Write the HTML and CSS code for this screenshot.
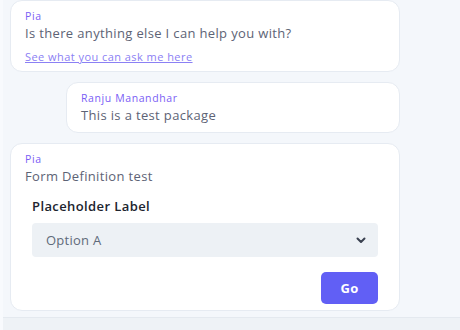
FILE: index.html
```html
<!DOCTYPE html>
<html>
<head>
<meta charset="utf-8">
<link rel="stylesheet" href="styles.css">
</head>
<body>
<div class="page">
  <div class="chat">
    <div class="card bot">
      <div class="name">Pia</div>
      <div class="msg">Is there anything else I can help you with?</div>
      <a class="link" href="#">See what you can ask me here</a>
    </div>
    <div class="card user">
      <div class="name">Ranju Manandhar</div>
      <div class="msg">This is a test package</div>
    </div>
    <div class="card bot form-card">
      <div class="name">Pia</div>
      <div class="msg">Form Definition test</div>
      <div class="form">
        <div class="label">Placeholder Label</div>
        <div class="select">
          <span>Option A</span>
          <svg class="chev" width="10" height="7" viewBox="0 0 10 7"><path d="M1.5 1.5 L5 5 L8.5 1.5" fill="none" stroke="#3a4150" stroke-width="2" stroke-linecap="round" stroke-linejoin="round"/></svg>
        </div>
        <div class="actions"><button class="go">Go</button></div>
      </div>
    </div>
  </div>
  <div class="footer"></div>
</div>
</body>
</html>
```
FILE: styles.css
```css
html, body {
  margin: 0;
  padding: 0;
  background: #f4f7fb;
  font-family: "Open Sans", "Liberation Sans", sans-serif;
}
.page {
  width: 460px;
  height: 330px;
  display: flex;
  flex-direction: column;
  overflow: hidden;
  border-left: 3px solid #f8fafd;
  box-sizing: border-box;
}
.chat {
  flex: 1;
  display: flex;
  flex-direction: column;
  align-items: flex-start;
  gap: 10px;
  padding: 0 0 0 7px;
}
.card {
  background: #ffffff;
  border: 1px solid #e6ebf2;
  border-radius: 12px;
  box-sizing: border-box;
  padding: 7px 14px 7px 14px;
  display: flex;
  flex-direction: column;
}
.bot { width: 390px; }
.user { width: 334px; margin-left: 56px; }
.form-card { padding-bottom: 6px; }
.name {
  font-size: 10.5px;
  line-height: 16px;
  color: #7a5ef5;
  letter-spacing: 0.6px;
}
.msg {
  font-size: 13px;
  line-height: 19px;
  color: #5d6375;
  letter-spacing: 0.35px;
}
.link {
  margin-top: 6px;
  font-size: 11px;
  line-height: 15px;
  color: #8b80f4;
  text-decoration: underline;
  align-self: flex-start;
  letter-spacing: 0.45px;
}
.form {
  padding: 11px 7px 0 7px;
  display: flex;
  flex-direction: column;
}
.label {
  font-size: 13px;
  font-weight: 600;
  line-height: 18px;
  color: #20242e;
  margin-bottom: 8px;
  letter-spacing: 0.4px;
}
.select {
  height: 34px;
  background: #edf1f5;
  border-radius: 4px;
  display: flex;
  align-items: center;
  justify-content: space-between;
  padding: 0 12px 0 14px;
  font-size: 13px;
  color: #5f6a7a;
  letter-spacing: 0.25px;
}
.chev { display: block; }
.actions {
  display: flex;
  justify-content: flex-end;
  margin-top: 15px;
}
.go {
  width: 57px;
  height: 32px;
  border: none;
  border-radius: 5px;
  background: #615ff5;
  color: #ffffff;
  font-family: "Open Sans", "Liberation Sans", sans-serif;
  font-size: 13px;
  font-weight: 700;
  letter-spacing: 0.3px;
}
.footer {
  height: 12px;
  border-top: 1px solid #e4e9ef;
  background: #eef2f6;
}
```
